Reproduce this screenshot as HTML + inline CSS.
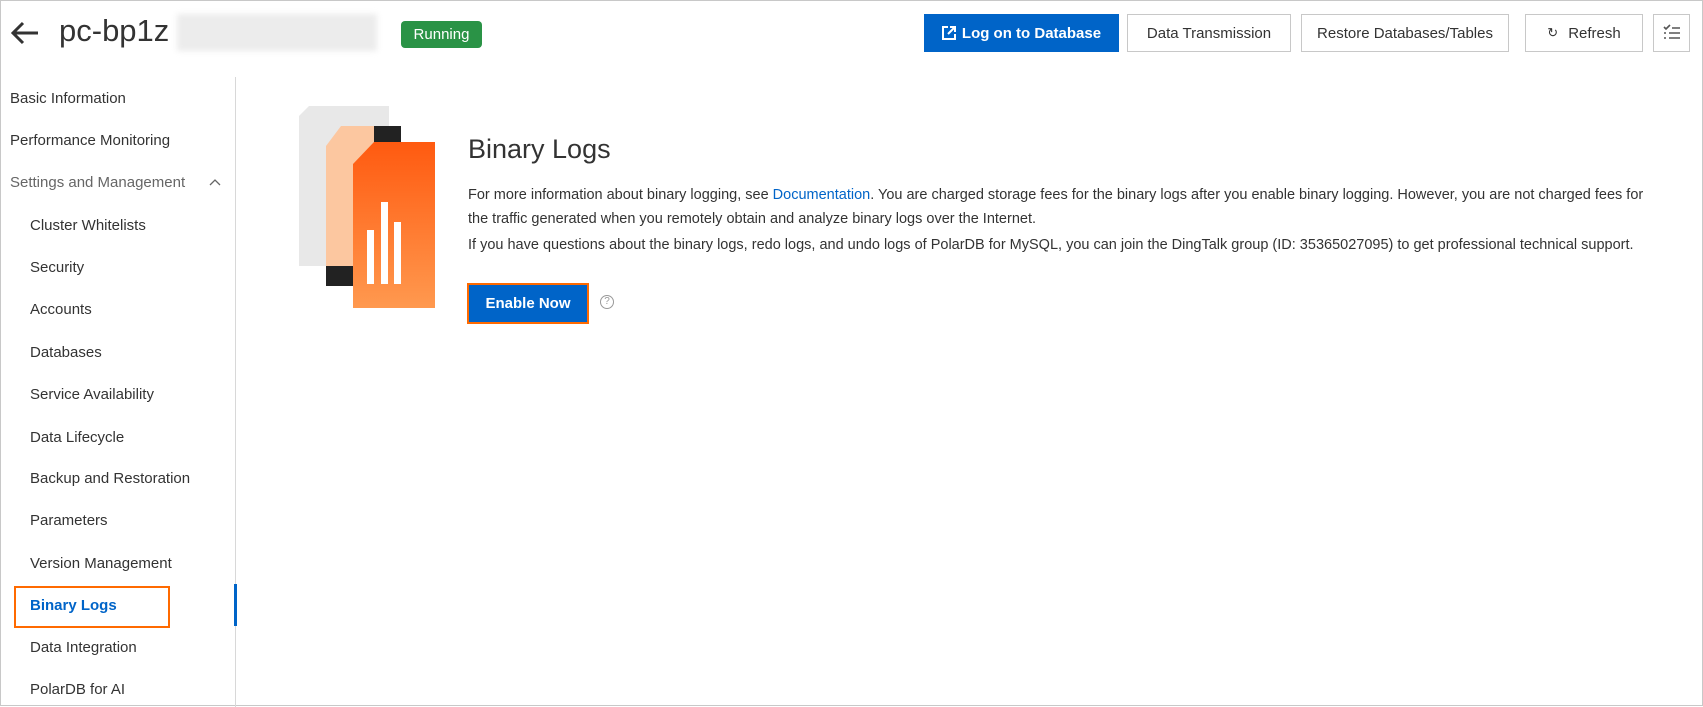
<!DOCTYPE html>
<html><head><meta charset="utf-8"><style>
*{margin:0;padding:0;box-sizing:border-box}
body{width:1703px;height:706px;background:#fff;font-family:"Liberation Sans",sans-serif;color:#333;position:relative;overflow:hidden;border:1px solid #c8c8c8}
.a{position:absolute}
.btn{position:absolute;top:13px;height:38px;border:1px solid #c8c8c8;background:#fff;font-size:15px;color:#333;display:flex;align-items:center;justify-content:center}
.nav{position:absolute;font-size:15px;color:#333;white-space:nowrap}
p{font-size:14.5px;line-height:24px;color:#333;white-space:nowrap}
</style></head><body>
<svg class="a" style="left:9px;top:20px" width="30" height="24" viewBox="0 0 30 24"><path d="M28 12H3M13 2L3 12l10 10" stroke="#333" stroke-width="3" fill="none"/></svg>
<div class="a" style="left:58px;top:12px;font-size:31px;color:#333">pc-bp1z</div>
<div class="a" style="left:176px;top:13px;width:200px;height:37px;background:#ececec;filter:blur(3px)"></div>
<div class="a" style="left:400px;top:20px;width:81px;height:27px;background:#2a9346;border-radius:4px;color:#fff;font-size:15px;text-align:center;line-height:27px">Running</div>
<div class="btn" style="left:923px;width:195px;background:#0064c8;border-color:#0064c8;color:#fff;font-weight:bold">
<svg width="14" height="14" viewBox="0 0 14 14" style="margin-right:6px"><path d="M6 1H1v12h12V8M8 1h5v5M13 1L6 8" stroke="#fff" stroke-width="2" fill="none"/></svg>Log on to Database</div>
<div class="btn" style="left:1126px;width:164px">Data Transmission</div>
<div class="btn" style="left:1300px;width:208px">Restore Databases/Tables</div>
<div class="btn" style="left:1524px;width:118px"><span style="font-size:13px;margin-right:10px">↻</span>Refresh</div>
<div class="btn" style="left:1652px;width:37px">
<svg width="20" height="20" viewBox="0 0 20 20"><path d="M2 4l2 2 4-4M10 5h8M2 10h2M7 10h11M2 15h2M7 15h11" stroke="#555" stroke-width="1.6" fill="none"/></svg></div>
<div class="a" style="left:234px;top:76px;width:1px;height:630px;background:#d8d8d8"></div>
<div class="a" style="left:233px;top:583px;width:3px;height:42px;background:#0064c8"></div>
<div class="nav" style="left:9px;top:89px">Basic Information</div>
<div class="nav" style="left:9px;top:131px">Performance Monitoring</div>
<div class="nav" style="left:9px;top:173px;color:#666">Settings and Management</div>
<svg class="a" style="left:208px;top:177px" width="12" height="8"><path d="M1 7l5-5 5 5" stroke="#666" stroke-width="1.3" fill="none"/></svg>
<div class="nav" style="left:29px;top:216px">Cluster Whitelists</div>
<div class="nav" style="left:29px;top:258px">Security</div>
<div class="nav" style="left:29px;top:300px">Accounts</div>
<div class="nav" style="left:29px;top:343px">Databases</div>
<div class="nav" style="left:29px;top:385px">Service Availability</div>
<div class="nav" style="left:29px;top:428px">Data Lifecycle</div>
<div class="nav" style="left:29px;top:469px">Backup and Restoration</div>
<div class="nav" style="left:29px;top:511px">Parameters</div>
<div class="nav" style="left:29px;top:554px">Version Management</div>
<div class="a" style="left:13px;top:585px;width:156px;height:42px;border:2px solid #ff6a00"></div>
<div class="nav" style="left:29px;top:596px;font-weight:bold;color:#0064c8">Binary Logs</div>
<div class="nav" style="left:29px;top:638px">Data Integration</div>
<div class="nav" style="left:29px;top:680px">PolarDB for AI</div>
<svg class="a" style="left:298px;top:105px" width="140" height="202" viewBox="0 0 140 202">
<defs><linearGradient id="g" x1="0" y1="0" x2="0" y2="1"><stop offset="0" stop-color="#ff5a10"/><stop offset="1" stop-color="#ff9a50"/></linearGradient></defs>
<path d="M0 10L10 0h80v160H0z" fill="#e8e8e8"/>
<path d="M27 40L42 20h60v160H27z" fill="#fcc7a0"/>
<rect x="75" y="20" width="27" height="22" fill="#222"/>
<rect x="27" y="160" width="27" height="20" fill="#222"/>
<path d="M54 58L75 36h61v169H54z" fill="url(#g)"/>
<rect x="68" y="124" width="7" height="54" fill="#fff"/>
<rect x="82" y="96" width="7" height="82" fill="#fff"/>
<rect x="95" y="116" width="7" height="62" fill="#fff"/>
</svg>
<div class="a" style="left:467px;top:133px;font-size:27px;color:#333">Binary Logs</div>
<div class="a" style="left:467px;top:182px;width:1222px">
<p>For more information about binary logging, see <span style="color:#0064c8">Documentation</span>. You are charged storage fees for the binary logs after you enable binary logging. However, you are not charged fees for<br>the traffic generated when you remotely obtain and analyze binary logs over the Internet.</p>
<p style="margin-top:2px">If you have questions about the binary logs, redo logs, and undo logs of PolarDB for MySQL, you can join the DingTalk group (ID: 35365027095) to get professional technical support.</p>
</div>
<div class="a" style="left:466px;top:282px;width:122px;height:41px;border:2px solid #ff6a00;background:#0064c8"></div>
<div class="a" style="left:468px;top:284px;width:118px;height:37px;background:#0064c8;color:#fff;font-weight:bold;font-size:15px;text-align:center;line-height:37px">Enable Now</div>
<div class="a" style="left:599px;top:294px;width:14px;height:14px;border:1px solid #999;border-radius:50%;font-size:10px;color:#999;text-align:center;line-height:12px">?</div>
</body></html>
